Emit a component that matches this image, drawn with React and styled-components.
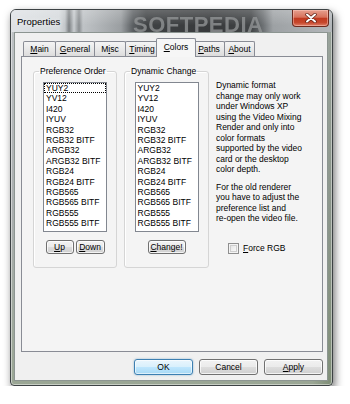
import React from "react";
import styled, { createGlobalStyle, css } from "styled-components";

const GlobalStyle = createGlobalStyle`
  html, body {
    margin: 0;
    padding: 0;
    background: #ffffff;
  }
  body {
    font-family: "Liberation Sans", Arial, sans-serif;
    color: #000;
  }
`;

const Page = styled.div`
  padding: 9px 0 0 10px;
`;

const Window = styled.div`
  position: relative;
  width: 323px;
  box-sizing: border-box;
  border: 1px solid #3d4244;
  border-radius: 6px 6px 4px 4px;
  background:
    linear-gradient(90deg, rgba(0, 0, 0, 0) 94%, rgba(70, 92, 58, 0.35) 100%),
    linear-gradient(180deg, #bfc3c6 0%, #a9aeae 55%, #9aa694 100%);
  box-shadow: 2px 4px 9px rgba(0, 0, 0, 0.55), inset 0 0 0 1px rgba(255, 255, 255, 0.45);
`;

const TitleBar = styled.div`
  height: 22px;
  display: flex;
  align-items: flex-start;
  border-radius: 5px 5px 0 0;
  background:
    linear-gradient(180deg, rgba(255, 255, 255, 0.22), rgba(255, 255, 255, 0) 70%),
    linear-gradient(
      90deg,
      #dfe2e5 0px,
      #d6dadd 48px,
      #c3c7ca 54px,
      #7c8083 58px,
      #c9cdd0 63px,
      #8a8e91 68px,
      #bfc3c6 72px,
      #b3b7ba 85px,
      #9a9ea1 110px,
      #5a5e61 122px,
      #3f4244 135px,
      #37393b 200px,
      #414446 240px,
      #6c7073 252px,
      #9da1a4 262px,
      #b3b7ba 321px
    );
`;

const Title = styled.div`
  padding: 6px 0 0 6px;
  font-size: 9.5px;
  line-height: 11px;
  text-shadow: 0 0 4px rgba(255, 255, 255, 0.9);
`;

const CloseButton = styled.div`
  margin-left: auto;
  margin-right: 3px;
  width: 37px;
  height: 17px;
  box-sizing: border-box;
  border: 1px solid #6e2a1e;
  border-top: none;
  border-radius: 0 0 4px 4px;
  display: flex;
  align-items: center;
  justify-content: center;
  background: linear-gradient(
    180deg,
    #e6a08f 0%,
    #d7725c 45%,
    #c13a20 52%,
    #c6472c 78%,
    #df7f68 100%
  );
  box-shadow: inset 0 0 0 1px rgba(255, 210, 200, 0.45);
`;

const Watermark = styled.div`
  position: absolute;
  left: 122px;
  top: 2px;
  font-family: "Liberation Sans", Arial, sans-serif;
  font-weight: bold;
  font-size: 22px;
  letter-spacing: 0.5px;
  color: rgba(150, 152, 154, 0.75);
  filter: blur(0.6px);
  pointer-events: none;
  white-space: nowrap;
`;

const Client = styled.div`
  margin: 0 4px 4px 3px;
  border: 1px solid #8c9591;
  background: #f0f0f0;
  padding: 5px 4px 5px 6px;
`;

const TabStrip = styled.div`
  display: flex;
  align-items: flex-end;
  height: 18px;
  padding-left: 2px;
`;

const Tab = styled.div`
  position: relative;
  width: ${(p) => p.$w}px;
  height: 15px;
  box-sizing: border-box;
  margin-right: -1px;
  border: 1px solid #898c95;
  border-bottom: none;
  border-radius: 2px 2px 0 0;
  display: flex;
  align-items: center;
  justify-content: center;
  font-size: 8.5px;
  background: linear-gradient(180deg, #f4f4f4 0%, #e9e9e9 50%, #dcdcdc 100%);

  ${(p) =>
    p.$active &&
    css`
      z-index: 1;
      height: 19px;
      margin: 0 -3px -1px -2px;
      padding-bottom: 3px;
      background: #f6f6f6;
    `}
`;

const Key = styled.span`
  text-decoration: underline;
  text-underline-offset: 1px;
`;

const Panel = styled.div`
  height: 296px;
  box-sizing: border-box;
  border: 1px solid #898c95;
  background: #f4f4f4;
  display: flex;
  align-items: flex-start;
  padding: 9px 8px 0 11px;
`;

const GroupBox = styled.fieldset`
  width: ${(p) => p.$w}px;
  min-width: 0;
  box-sizing: border-box;
  margin: 0 7px 0 0;
  padding: 5px 0 13px;
  border: 1px solid #d5d5d5;
  border-radius: 3px;
  box-shadow: inset 1px 1px 0 #ffffff;
  display: flex;
  flex-direction: column;
  align-items: center;
  gap: 8px;
`;

const Legend = styled.legend`
  margin-left: 5px;
  padding: 0 1px;
  font-size: 8.5px;
  line-height: 11px;
`;

const ListBox = styled.div`
  width: 64px;
  height: 150px;
  box-sizing: border-box;
  border: 1px solid #828790;
  background: #ffffff;
`;

const ListItem = styled.div`
  height: 10.4px;
  line-height: 10.4px;
  padding-left: 2px;
  font-size: 8.5px;
  white-space: nowrap;

  ${(p) =>
    p.$focused &&
    css`
      outline: 1px dotted #000;
      outline-offset: -1px;
    `}
`;

const ButtonPair = styled.div`
  display: flex;
  gap: 2px;
`;

const buttonFace = css`
  box-sizing: border-box;
  padding: 0;
  border: 1px solid #707070;
  border-radius: 3px;
  font-family: "Liberation Sans", Arial, sans-serif;
  color: #000;
  background: linear-gradient(180deg, #f2f2f2 0%, #ebebeb 48%, #dddddd 52%, #cfcfcf 100%);
  box-shadow: inset 0 0 0 1px rgba(255, 255, 255, 0.75);
`;

const SmallButton = styled.button`
  ${buttonFace};
  width: ${(p) => p.$w}px;
  height: 14px;
  font-size: 8.5px;
  line-height: 12px;
`;

const InfoColumn = styled.div`
  padding-top: 14px;
  font-size: 8.5px;
  line-height: 10.5px;
`;

const Paragraph = styled.p`
  margin: 0 0 7px;

  &:last-of-type {
    margin-bottom: 0;
  }
`;

const CheckRow = styled.label`
  display: flex;
  align-items: center;
  gap: 4px;
  margin: 19px 0 0 12px;
  line-height: 11px;
`;

const CheckBox = styled.span`
  width: 11px;
  height: 11px;
  box-sizing: border-box;
  border: 1px solid #8f8f8f;
  background: linear-gradient(135deg, #dedede 0%, #f4f4f4 60%, #fbfbfb 100%);
  box-shadow: inset 0 0 0 1px #f4f4f4, inset 0 0 0 2px #cfcfcf;
`;

const ButtonRow = styled.div`
  display: flex;
  justify-content: flex-end;
  gap: 6px;
  margin-top: 7px;
`;

const DialogButton = styled.button`
  ${buttonFace};
  width: 59px;
  height: 16px;
  font-size: 8.5px;

  ${(p) =>
    p.$default &&
    css`
      border-color: #3c7fb1;
      background: linear-gradient(180deg, #eaf6fd 0%, #d9f0fc 48%, #bee6fd 52%, #a7d9f5 100%);
      box-shadow: inset 0 0 0 1px rgba(255, 255, 255, 0.6), 0 0 2px rgba(60, 127, 177, 0.6);
    `}
`;

const formats = [
  "YUY2",
  "YV12",
  "I420",
  "IYUV",
  "RGB32",
  "RGB32 BITF",
  "ARGB32",
  "ARGB32 BITF",
  "RGB24",
  "RGB24 BITF",
  "RGB565",
  "RGB565 BITF",
  "RGB555",
  "RGB555 BITF",
];

const tabs = [
  { key: "M", rest: "ain", w: 33 },
  { key: "G", rest: "eneral", w: 40 },
  { pre: "M", key: "i", rest: "sc", w: 32 },
  { key: "T", rest: "iming", w: 34 },
  { key: "C", rest: "olors", w: 40, active: true },
  { key: "P", rest: "aths", w: 32 },
  { key: "A", rest: "bout", w: 31 },
];

const CloseIcon = () => (
  <svg width="12" height="10" viewBox="0 0 12 10">
    <path d="M2 1.5 L10 8.5 M10 1.5 L2 8.5" stroke="#5a1d12" strokeWidth="3.4" strokeLinecap="round" />
    <path d="M2 1.5 L10 8.5 M10 1.5 L2 8.5" stroke="#ffffff" strokeWidth="2" strokeLinecap="round" />
  </svg>
);

const FormatList = ({ focus }) => (
  <ListBox>
    {formats.map((f, i) => (
      <ListItem key={f} $focused={focus && i === 0}>
        {f}
      </ListItem>
    ))}
  </ListBox>
);

export default function App() {
  return (
    <>
      <GlobalStyle />
      <Page>
        <Window>
          <TitleBar>
            <Title>Properties</Title>
            <CloseButton>
              <CloseIcon />
            </CloseButton>
          </TitleBar>
          <Client>
            <TabStrip>
              {tabs.map((t) => (
                <Tab key={t.key + t.rest} $w={t.w} $active={t.active}>
                  {t.pre}
                  <Key>{t.key}</Key>
                  {t.rest}
                </Tab>
              ))}
            </TabStrip>
            <Panel>
              <GroupBox $w={84}>
                <Legend>Preference Order</Legend>
                <FormatList focus />
                <ButtonPair>
                  <SmallButton $w={28}>
                    <Key>U</Key>p
                  </SmallButton>
                  <SmallButton $w={29}>
                    <Key>D</Key>own
                  </SmallButton>
                </ButtonPair>
              </GroupBox>
              <GroupBox $w={85}>
                <Legend>Dynamic Change</Legend>
                <FormatList />
                <SmallButton $w={38}>
                  <Key>C</Key>hange!
                </SmallButton>
              </GroupBox>
              <InfoColumn>
                <Paragraph>
                  Dynamic format
                  <br />
                  change may only work
                  <br />
                  under Windows XP
                  <br />
                  using the Video Mixing
                  <br />
                  Render and only into
                  <br />
                  color formats
                  <br />
                  supported by the video
                  <br />
                  card or the desktop
                  <br />
                  color depth.
                </Paragraph>
                <Paragraph>
                  For the old renderer
                  <br />
                  you have to adjust the
                  <br />
                  preference list and
                  <br />
                  re-open the video file.
                </Paragraph>
                <CheckRow>
                  <CheckBox />
                  <span>
                    <Key>F</Key>orce RGB
                  </span>
                </CheckRow>
              </InfoColumn>
            </Panel>
            <ButtonRow>
              <DialogButton $default>OK</DialogButton>
              <DialogButton>Cancel</DialogButton>
              <DialogButton>
                <Key>A</Key>pply
              </DialogButton>
            </ButtonRow>
          </Client>
          <Watermark>SOFTPEDIA</Watermark>
        </Window>
      </Page>
    </>
  );
}
